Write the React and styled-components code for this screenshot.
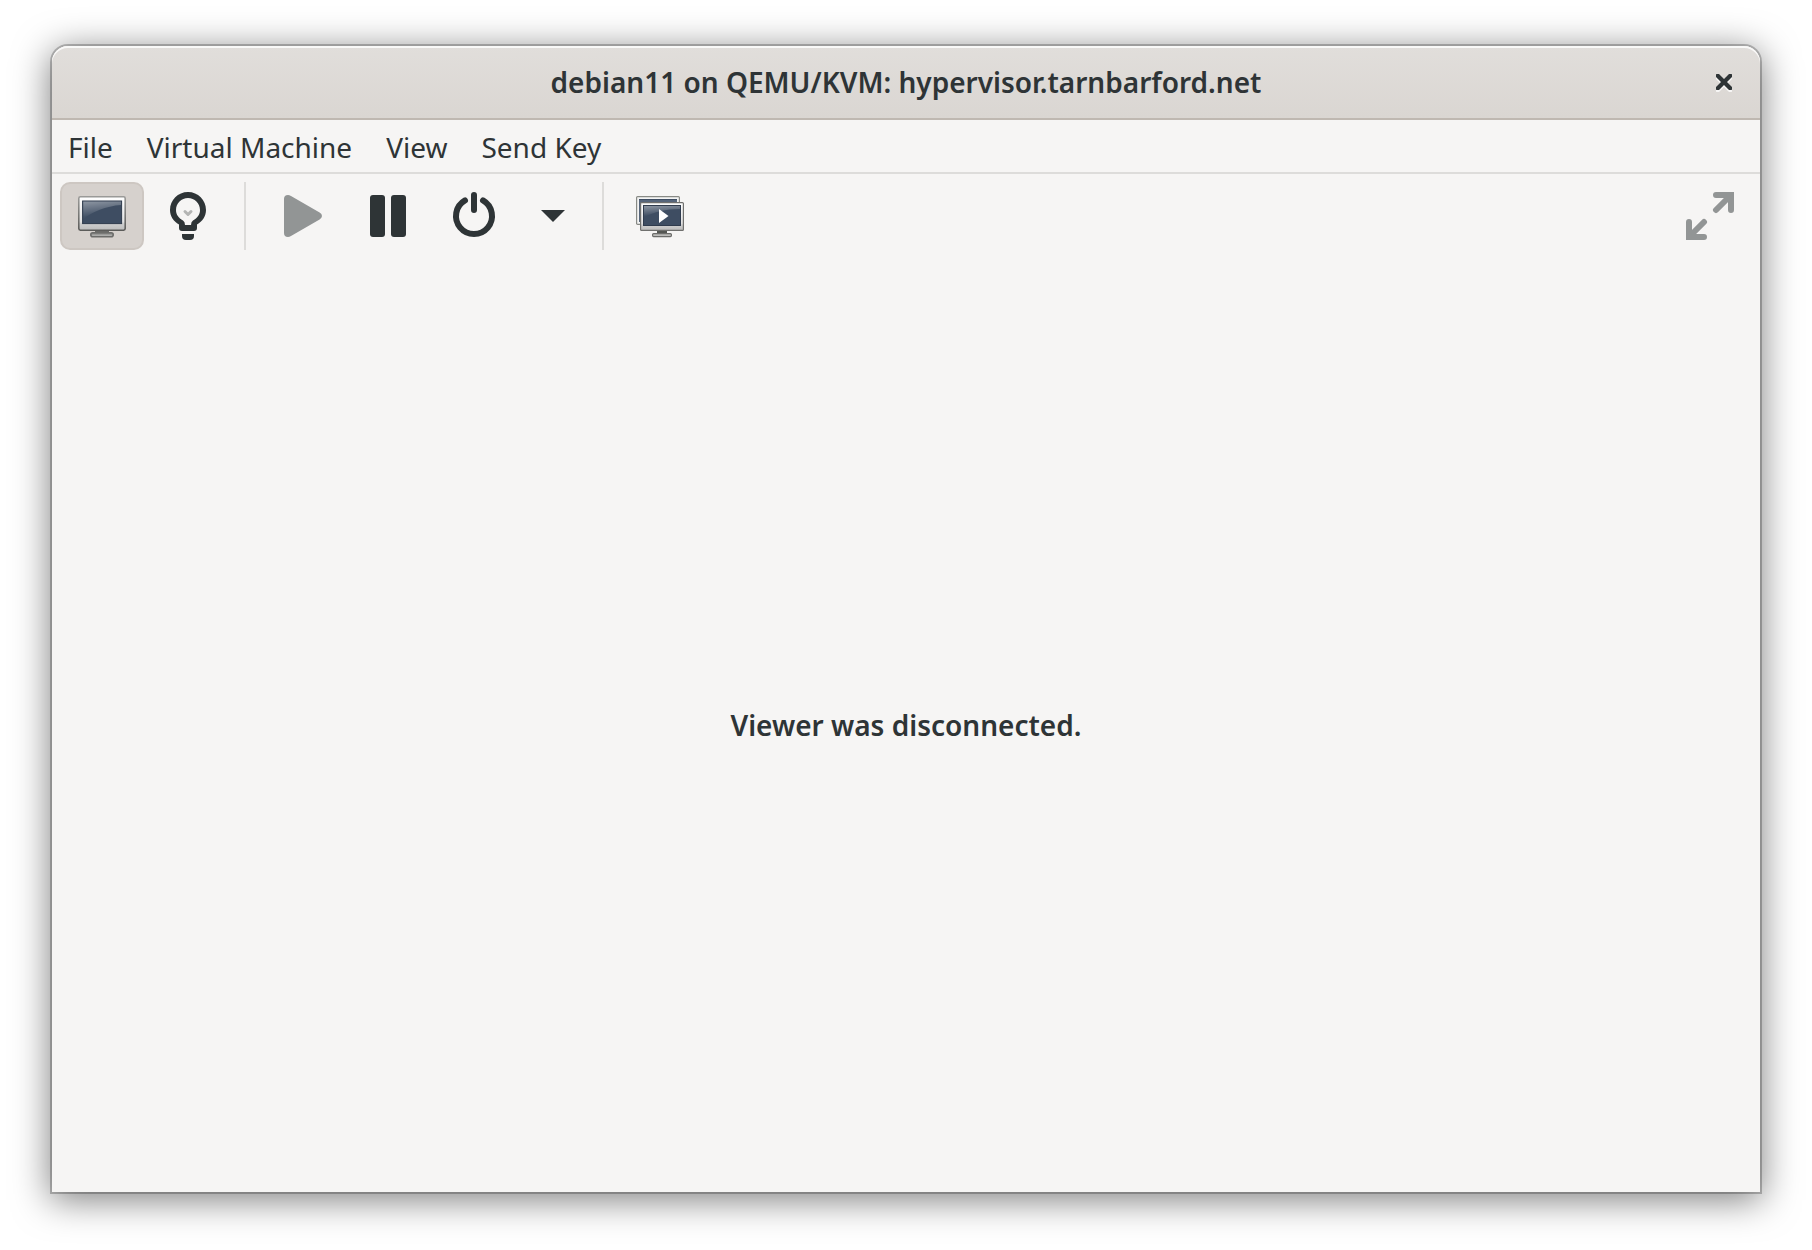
import React from "react";
import styled, { createGlobalStyle } from "styled-components";

const ink = "#2e3436";
const muted = "#929595";
const surface = "#f6f5f4";

const GlobalStyle = createGlobalStyle`
  *, *::before, *::after { box-sizing: border-box; }
  body {
    margin: 0;
    background: #fff;
    color: ${ink};
    font-family: "Noto Sans", "Open Sans", sans-serif;
    font-size: 28px;
    line-height: 40px;
  }
  button { font: inherit; color: inherit; cursor: pointer; }
`;

const Desktop = styled.div`
  display: flex;
  min-height: 100vh;
  padding: 46px 52px 58px;
`;

const Window = styled.main`
  flex: 1;
  display: flex;
  flex-direction: column;
  min-width: 0;
  background: ${surface};
  border-radius: 16px 16px 0 0;
  box-shadow:
    0 6px 36px 2px rgba(0, 0, 0, 0.5),
    0 0 0 2px rgba(0, 0, 0, 0.23);
`;

const TitleBar = styled.header`
  display: grid;
  grid-template-columns: 1fr auto 1fr;
  align-items: center;
  height: 74px;
  padding: 0 12px;
  border-bottom: 2px solid #bfb8b1;
  border-radius: 16px 16px 0 0;
  background: linear-gradient(to top, #dad6d2, #e1dedb);
  box-shadow: inset 0 2px rgba(255, 255, 255, 0.8);
`;

const Title = styled.h1`
  grid-column: 2;
  margin: 0;
  font-size: 28px;
  font-weight: 600;
  line-height: 40px;
  white-space: nowrap;
`;

const CloseButton = styled.button`
  grid-column: 3;
  justify-self: end;
  display: flex;
  align-items: center;
  justify-content: center;
  width: 48px;
  height: 48px;
  padding: 0;
  border: 0;
  background: none;

  svg {
    overflow: visible;
    filter: drop-shadow(0 2px 0 rgba(255, 255, 255, 0.77));
  }
`;

const MenuBar = styled.nav`
  display: flex;
  gap: 2px;
  height: 54px;
  border-bottom: 2px solid #dddcda;
`;

const MenuItem = styled.button`
  padding: 2px 16px 0;
  border: 0;
  background: none;
  white-space: nowrap;
`;

const Toolbar = styled.div`
  display: flex;
  gap: 2px;
  padding: 8px;
`;

const ToolButton = styled.button`
  display: flex;
  align-items: center;
  justify-content: center;
  width: ${(p) => (p.$narrow ? 70 : 84)}px;
  height: 68px;
  padding: 0;
  border: 2px solid ${(p) => (p.$active ? "#cdc7c2" : "transparent")};
  border-radius: 10px;
  background: ${(p) => (p.$active ? "#d6d1cd" : "transparent")};
  color: ${(p) => (p.disabled ? muted : ink)};
`;

const Divider = styled.div`
  width: 2px;
  margin: 0 12px;
  background: #dddcda;
`;

const Spacer = styled.div`
  flex: 1;
`;

const Viewer = styled.section`
  flex: 1;
  display: flex;
  align-items: center;
  justify-content: center;
`;

const Status = styled.p`
  margin: 0;
  font-weight: 600;
`;

const Icon = ({ size = 48, height = size, children }) => (
  <svg
    width={size}
    height={height}
    viewBox={`0 0 ${size} ${height}`}
    fill="currentColor"
    aria-hidden="true"
  >
    {children}
  </svg>
);

const CloseIcon = () => (
  <Icon size={16}>
    <path d="M0.500 0H3L8 5 13 0H15.500L16 0.500V3L11 8 16 13V15.500L15.500 16H13L8 11 3 16H0.500L0 15.500V13L5 8 0 3V0.500Z" />
  </Icon>
);

const MonitorIcon = () => (
  <Icon>
    <defs>
      <linearGradient id="monitorFrame" x1="0" y1="0" x2="0" y2="1">
        <stop offset="0" stopColor="#ffffff" />
        <stop offset="0.75" stopColor="#e2e2e2" />
        <stop offset="0.8" stopColor="#cfcfcf" />
        <stop offset="1" stopColor="#bcbcbc" />
      </linearGradient>
      <linearGradient id="monitorEdge" x1="0" y1="0" x2="0" y2="1">
        <stop offset="0" stopColor="#9a9a98" />
        <stop offset="1" stopColor="#5c5c5a" />
      </linearGradient>
      <linearGradient id="monitorGlare" x1="0.1" y1="0" x2="0.35" y2="1">
        <stop offset="0" stopColor="#fff" stopOpacity="0.4" />
        <stop offset="0.8" stopColor="#fff" stopOpacity="0.03" />
        <stop offset="1" stopColor="#fff" stopOpacity="0" />
      </linearGradient>
      <linearGradient id="monitorFoot" x1="0" y1="0" x2="0" y2="1">
        <stop offset="0" stopColor="#7c7c7a" />
        <stop offset="1" stopColor="#c4c4c2" />
      </linearGradient>
    </defs>
    <rect x="17" y="38" width="14" height="5" fill="#6a6a68" />
    <rect x="12.8" y="40.8" width="22.4" height="4" rx="2" fill="url(#monitorFoot)" stroke="#6c6c6a" strokeWidth="1.6" />
    <rect x="0.8" y="4.8" width="46.4" height="33.4" rx="1.6" fill="url(#monitorFrame)" stroke="url(#monitorEdge)" strokeWidth="1.6" />
    <rect x="4.6" y="9" width="39" height="22.6" fill="#3e4d62" stroke="#2f3b4d" strokeWidth="1" />
    <path d="M5.2 9.6H43V13C28 14 14 20 5.2 27Z" fill="url(#monitorGlare)" />
  </Icon>
);

const BulbIcon = () => (
  <Icon>
    <path
      fillRule="evenodd"
      d="M24 0C14 0 6 8 6 18C6 24.4 9.6 29.4 15 32.6V36Q15 39 18 39H30Q33 39 33 36V32.6C38.4 29.4 42 24.4 42 18C42 8 34 0 24 0ZM24 6C30.6 6 36 11.2 36 18C36 22.6 33.4 26 29 28.6Q27 30 27 33H21Q21 30 19 28.6C14.6 26 12 22.6 12 18C12 11.2 17.4 6 24 6Z"
    />
    <path d="M18 42H30V44Q30 48 26 48H22Q18 48 18 44Z" />
    <path d="M21 19.5L24 22.5L27 19.5" fill="none" stroke="#b4b5b4" strokeWidth="3" strokeLinecap="round" strokeLinejoin="round" />
  </Icon>
);

const PlayIcon = () => (
  <Icon>
    <path d="M6 7Q6 3 10 3Q11.400 3 13 4L41.600 20.600Q44 22 44 24Q44 26 41.600 27.400L13 44Q11.400 45 10 45Q6 45 6 41Z" />
  </Icon>
);

const PauseIcon = () => (
  <Icon>
    <rect x="6" y="3" width="15" height="42" rx="3" />
    <rect x="27" y="3" width="15" height="42" rx="3" />
  </Icon>
);

const PowerIcon = () => (
  <Icon>
    <path
      d="M15 8.400A18 18 0 1 0 33 8.400M24 3V18"
      fill="none"
      stroke="currentColor"
      strokeWidth="6"
      strokeLinecap="round"
    />
  </Icon>
);

const ArrowIcon = () => (
  <Icon size={24} height={12}>
    <path d="M0 0H24L12 12Z" />
  </Icon>
);

const ConsolesIcon = () => (
  <Icon>
    <rect x="0.6" y="4.6" width="42.800" height="27.800" rx="1" fill="#f4f4f4" stroke="#888a85" strokeWidth="1.2" />
    <rect x="3" y="7" width="38" height="23" fill="#56657a" />
    <path d="M3 7.500H41" stroke="#3e4d62" />
    <rect x="21" y="38" width="10" height="4" fill="#555753" />
    <rect x="16.600" y="41.600" width="18.800" height="3" rx="1" fill="#bcbcba" stroke="#6c6c6a" strokeWidth="1.2" />
    <rect x="4.600" y="10.600" width="42.800" height="27.800" rx="1" fill="url(#monitorFrame)" stroke="#70706e" strokeWidth="1.2" />
    <rect x="7.500" y="13.500" width="37" height="20" fill="#3e4d62" stroke="#2f3b4d" />
    <path d="M8 14H44V17C30 17 18 20 8 25Z" fill="url(#monitorGlare)" />
    <path d="M23 17L32.500 24L23 31Z" fill="#fff" />
  </Icon>
);

const FullscreenIcon = () => (
  <Icon>
    <path
      d="M30 3H45V18M44 4L30 18M3 30V45H18M4 44L18 30"
      fill="none"
      stroke="currentColor"
      strokeWidth="6"
      strokeLinecap="round"
    />
  </Icon>
);

const menus = ["File", "Virtual Machine", "View", "Send Key"];

export default function App() {
  return (
    <>
      <GlobalStyle />
      <Desktop>
        <Window>
          <TitleBar>
            <Title>debian11 on QEMU/KVM: hypervisor.tarnbarford.net</Title>
            <CloseButton aria-label="Close">
              <CloseIcon />
            </CloseButton>
          </TitleBar>
          <MenuBar aria-label="Main menu">
            {menus.map((name) => (
              <MenuItem key={name}>{name}</MenuItem>
            ))}
          </MenuBar>
          <Toolbar role="toolbar" aria-label="Machine controls">
            <ToolButton $active aria-pressed="true" aria-label="Console">
              <MonitorIcon />
            </ToolButton>
            <ToolButton aria-pressed="false" aria-label="Details">
              <BulbIcon />
            </ToolButton>
            <Divider />
            <ToolButton disabled aria-label="Run">
              <PlayIcon />
            </ToolButton>
            <ToolButton aria-label="Pause">
              <PauseIcon />
            </ToolButton>
            <ToolButton aria-label="Shut down">
              <PowerIcon />
            </ToolButton>
            <ToolButton $narrow aria-label="Shut down options">
              <ArrowIcon />
            </ToolButton>
            <Divider />
            <ToolButton aria-label="Snapshots">
              <ConsolesIcon />
            </ToolButton>
            <Spacer />
            <ToolButton disabled aria-label="Fullscreen">
              <FullscreenIcon />
            </ToolButton>
          </Toolbar>
          <Viewer>
            <Status>Viewer was disconnected.</Status>
          </Viewer>
        </Window>
      </Desktop>
    </>
  );
}
